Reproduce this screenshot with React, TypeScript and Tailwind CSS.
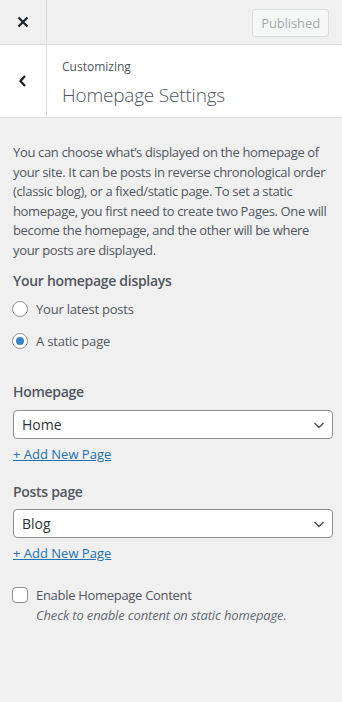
import React from "react";

const font = { fontFamily: '"Open Sans", "Noto Sans", sans-serif' };

function Chevron() {
  return (
    <svg width="16" height="16" viewBox="0 0 16 16" className="absolute right-[5px] top-[6px]">
      <path d="M3.5 6 L8 10.5 L12.5 6" fill="none" stroke="#50575e" strokeWidth="1.5" />
    </svg>
  );
}

function Select({ value }: { value: string }) {
  return (
    <div className="relative h-[29px] w-full rounded-[4px] border border-[#8c8f94] bg-white pl-[8px] text-[14px] leading-[27px] text-[#2c3338]">
      {value}
      <Chevron />
    </div>
  );
}

export default function App() {
  return (
    <div className="w-[342px] h-[702px] bg-[#f0f0f1] overflow-hidden" style={font}>
      <div className="flex h-[45px] border-b border-[#dcdcde]">
        <div className="flex w-[47px] items-center justify-center border-r border-[#dcdcde]">
          <svg width="12" height="12" viewBox="0 0 12 12">
            <path d="M1.5 1.5 L10.5 10.5 M10.5 1.5 L1.5 10.5" stroke="#1d2327" strokeWidth="2.2" />
          </svg>
        </div>
        <div className="ml-auto mr-[13px] mt-[9px] h-[28px] rounded-[3px] border border-[#dcdcde] bg-[#f6f7f7] px-[8px] text-[13px] leading-[26px] text-[#a7aaad] tracking-[-0.1px]">
          Published
        </div>
      </div>
      <div className="flex h-[73px] border-b border-[#dcdcde] bg-white">
        <div className="flex w-[47px] items-center justify-center border-r border-[#dcdcde]">
          <svg width="10" height="14" viewBox="0 0 10 14">
            <path d="M7 2 L2.5 7 L7 12" fill="none" stroke="#1d2327" strokeWidth="2.2" />
          </svg>
        </div>
        <div className="pl-[15px] pt-[13px]">
          <div className="text-[12px] leading-[18px] text-[#50575e]">Customizing</div>
          <div className="mt-[6px] text-[19px] font-light leading-[26px] text-[#50575e] tracking-[-0.2px]">Homepage Settings</div>
        </div>
      </div>
      <div className="pl-[13px] pr-[9px]">
        <p className="mt-[25px] pr-[4px] text-[13px] leading-[19.5px] text-[#50575e] tracking-[-0.35px]">
          You can choose what’s displayed on the homepage of your site. It can be posts in reverse chronological order (classic blog), or a fixed/static page. To set a static homepage, you first need to create two Pages. One will become the homepage, and the other will be where your posts are displayed.
        </p>
        <div className="mt-[11px] text-[14px] font-semibold leading-[20px] text-[#50575e] tracking-[-0.3px]">Your homepage displays</div>
        <div className="mt-[8px] flex items-center">
          <span className="ml-[-1px] h-[16px] w-[16px] rounded-full border border-[#8c8f94] bg-white" />
          <span className="ml-[8px] text-[13px] leading-[20px] text-[#50575e] tracking-[-0.2px]">Your latest posts</span>
        </div>
        <div className="mt-[12px] flex items-center">
          <span className="ml-[-1px] flex h-[16px] w-[16px] items-center justify-center rounded-full border border-[#8c8f94] bg-white">
            <span className="h-[8px] w-[8px] rounded-full bg-[#3582c4]" />
          </span>
          <span className="ml-[8px] text-[13px] leading-[20px] text-[#50575e] tracking-[-0.2px]">A static page</span>
        </div>
        <div className="mt-[31px] text-[14px] font-semibold leading-[20px] text-[#50575e] tracking-[-0.3px]">Homepage</div>
        <div className="mt-[8px]"><Select value="Home" /></div>
        <div className="mt-[5px] text-[13px] font-medium leading-[20px] text-[#2271b1] underline">+ Add New Page</div>
        <div className="mt-[18px] text-[14px] font-semibold leading-[20px] text-[#50575e] tracking-[-0.3px]">Posts page</div>
        <div className="mt-[7px]"><Select value="Blog" /></div>
        <div className="mt-[5px] text-[13px] font-medium leading-[20px] text-[#2271b1] underline">+ Add New Page</div>
        <div className="mt-[22px] flex items-center">
          <span className="ml-[-1px] h-[16px] w-[16px] rounded-[4px] border border-[#8c8f94] bg-white" />
          <span className="ml-[8px] text-[13px] leading-[20px] text-[#50575e] tracking-[-0.3px]">Enable Homepage Content</span>
        </div>
        <div className="pl-[23px] text-[13px] italic leading-[20px] text-[#646970] tracking-[-0.15px]">Check to enable content on static homepage.</div>
      </div>
    </div>
  );
}
